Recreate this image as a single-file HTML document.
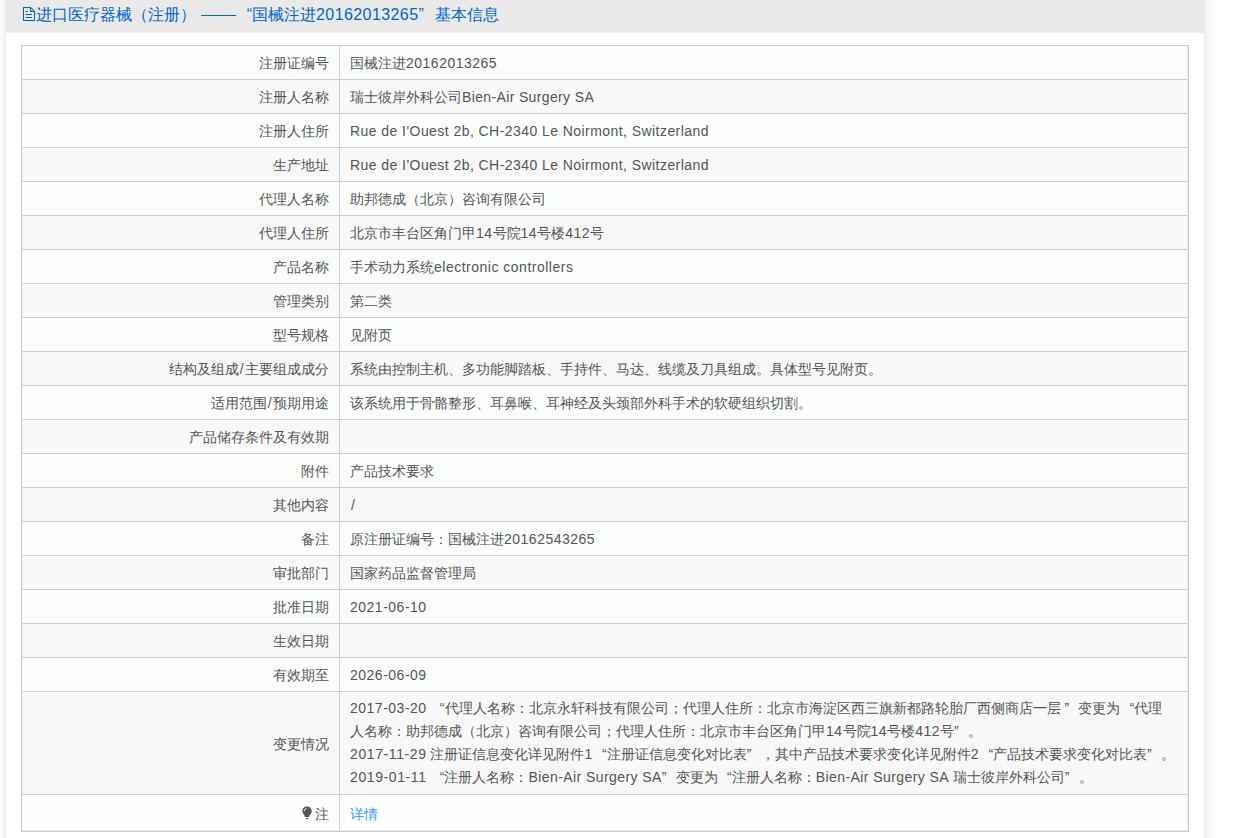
<!DOCTYPE html>
<html><head><meta charset="utf-8">
<style>
html,body{margin:0;padding:0;background:#fff;}
body{width:1241px;height:838px;overflow:hidden;position:relative;font-family:"Liberation Sans",sans-serif;}
#shl{position:absolute;left:0;top:0;width:6px;height:838px;background:linear-gradient(to right,#fafafa 0,#f6f6f6 60%,#e9e9e9 100%);}
#shr{position:absolute;left:1204px;top:0;width:10px;height:838px;background:linear-gradient(to right,#e9e9e9 0,#f3f3f3 15%,#f8f8f8 45%,#fcfcfc 80%,#fff 100%);}
#hdr{position:absolute;left:6px;top:0;width:1198px;height:33px;background:#e9e9e9;border-bottom:1px solid #eceef4;box-sizing:border-box;}
#ico{position:absolute;left:16px;top:6px;}
#title{position:absolute;left:30px;top:5px;font-size:16px;line-height:20px;color:#0066cc;white-space:nowrap;}
#dash{display:inline-block;width:35px;height:0;border-top:1.5px solid #0066cc;vertical-align:middle;position:relative;top:0px;margin-left:5px;}
.q1{display:inline-block;width:1em;text-align:right;}
.q2{display:inline-block;width:1em;text-align:left;}
.L{letter-spacing:.5px;}
.T{letter-spacing:.42px;}
#tbl{position:absolute;left:21px;top:45px;width:1168px;height:787px;border:1px solid #cccccc;box-sizing:border-box;box-shadow:inset -1px -1px 0 #e6eaf2;}
.r{position:relative;width:1165px;height:34px;border-bottom:1px solid #d0d0d0;box-sizing:border-box;background:#fcfefe;}
.r.e{background:#f8f8f8;}
.l{position:absolute;left:0;top:0;width:307px;padding-right:10px;height:100%;border-right:1px solid #d0d0d0;text-align:right;font-size:14px;line-height:35px;color:#555;white-space:nowrap;}
.v{position:absolute;left:328px;top:0;font-size:14px;line-height:35px;color:#555;white-space:nowrap;}
.r.big{height:103px;}
.r.big .l{line-height:104px;}
.r.big .v{top:5px;line-height:23px;}
.r.last{height:35px;border-bottom:none;}
.r.last .l{height:35px;line-height:38px;}
.r.last .v{line-height:38px;}
.sl{padding:0 1.3px;}
a{color:#3399ff;text-decoration:none;}
#bulb{position:absolute;left:279px;top:760px;}
</style></head><body>
<div id="shl"></div><div id="shr"></div>
<div id="hdr">
<svg id="ico" width="14" height="16" viewBox="0 0 14 16"><path d="M1.5 1.5H8.6L12.5 5.4V14.5H1.5Z M8.6 1.5V5.4H12.5" fill="none" stroke="#0066cc" stroke-width="1.05"/><path d="M3.6 5.5H6M3.6 8.5H9.9M3.6 11.5H9.9" stroke="#0066cc" stroke-width="1.05"/></svg>
<div id="title">进口医疗器械（注册）<span id="dash"></span><span class="q1">“</span>国械注进<span class="T">20162013265</span><span class="q2">”</span>基本信息</div></div>
<div id="tbl">
<div class="r"><div class="l">注册证编号</div><div class="v">国械注进<span class="L">20162013265</span></div></div>
<div class="r e"><div class="l">注册人名称</div><div class="v">瑞士彼岸外科公司<span class="L" style="letter-spacing:.36px">Bien-Air Surgery SA</span></div></div>
<div class="r"><div class="l">注册人住所</div><div class="v"><span class="L" style="letter-spacing:.44px">Rue de I'Ouest 2b, CH-2340 Le Noirmont, Switzerland</span></div></div>
<div class="r e"><div class="l">生产地址</div><div class="v"><span class="L" style="letter-spacing:.44px">Rue de I'Ouest 2b, CH-2340 Le Noirmont, Switzerland</span></div></div>
<div class="r"><div class="l">代理人名称</div><div class="v">助邦德成（北京）咨询有限公司</div></div>
<div class="r e"><div class="l">代理人住所</div><div class="v">北京市丰台区角门甲<span class="L">14</span>号院<span class="L">14</span>号楼<span class="L">412</span>号</div></div>
<div class="r"><div class="l">产品名称</div><div class="v">手术动力系统<span class="L">electronic controllers</span></div></div>
<div class="r e"><div class="l">管理类别</div><div class="v">第二类</div></div>
<div class="r"><div class="l">型号规格</div><div class="v">见附页</div></div>
<div class="r e"><div class="l">结构及组成<span class="sl">/</span>主要组成成分</div><div class="v">系统由控制主机、多功能脚踏板、手持件、马达、线缆及刀具组成。具体型号见附页。</div></div>
<div class="r"><div class="l">适用范围<span class="sl">/</span>预期用途</div><div class="v">该系统用于骨骼整形、耳鼻喉、耳神经及头颈部外科手术的软硬组织切割。</div></div>
<div class="r e"><div class="l">产品储存条件及有效期</div><div class="v"></div></div>
<div class="r"><div class="l">附件</div><div class="v">产品技术要求</div></div>
<div class="r e"><div class="l">其他内容</div><div class="v"><span style="padding-left:1px">/</span></div></div>
<div class="r"><div class="l">备注</div><div class="v">原注册证编号：国械注进<span class="L">20162543265</span></div></div>
<div class="r e"><div class="l">审批部门</div><div class="v">国家药品监督管理局</div></div>
<div class="r"><div class="l">批准日期</div><div class="v"><span class="L">2021-06-10</span></div></div>
<div class="r e"><div class="l">生效日期</div><div class="v"></div></div>
<div class="r"><div class="l">有效期至</div><div class="v"><span class="L">2026-06-09</span></div></div>
<div class="r e big"><div class="l">变更情况</div><div class="v"><span class="L">2017-03-20</span> <span class="q1">“</span>代理人名称：北京永轩科技有限公司；代理人住所：北京市海淀区西三旗新都路轮胎厂西侧商店一层 <span class="q2">”</span>变更为<span class="q1">“</span>代理<br>人名称：助邦德成（北京）咨询有限公司；代理人住所：北京市丰台区角门甲<span class="L">14</span>号院<span class="L">14</span>号楼<span class="L">412</span>号<span class="q2">”</span>。<br><span class="L" style="letter-spacing:.6px">2017-11-29</span> 注册证信息变化详见附件<span class="L">1</span><span class="q1">“</span>注册证信息变化对比表<span class="q2">”</span>，其中产品技术要求变化详见附件<span class="L">2</span><span class="q1">“</span>产品技术要求变化对比表<span class="q2">”</span>。<br><span class="L" style="letter-spacing:.6px">2019-01-11</span> <span class="q1">“</span>注册人名称：<span class="L" style="letter-spacing:.42px">Bien-Air Surgery SA</span><span class="q2">”</span>变更为<span class="q1">“</span>注册人名称：<span class="L" style="letter-spacing:.42px">Bien-Air Surgery SA</span> 瑞士彼岸外科公司<span class="q2">”</span>。</div></div>
<div class="r last"><div class="l">注</div><div class="v"><a>详情</a></div></div>
<svg id="bulb" width="12" height="14" viewBox="0 0 12 14"><path d="M6 0.6C3.3 0.6 1.3 2.6 1.3 5.1C1.3 6.9 2.4 8 3.3 9.2L3.9 10.9H8.1L8.7 9.2C9.6 8 10.7 6.9 10.7 5.1C10.7 2.6 8.7 0.6 6 0.6Z" fill="#555"/><path d="M3.2 5.2C3.2 3.6 4.3 2.5 5.6 2.3" fill="none" stroke="#fff" stroke-width="1"/><rect x="4.6" y="11.9" width="2.8" height="1.2" fill="#555"/></svg>
</div>
</body></html>
